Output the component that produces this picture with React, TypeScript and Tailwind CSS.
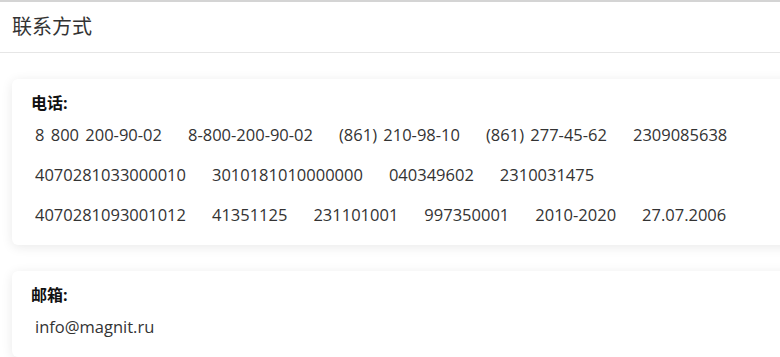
const rows = [
  ["8 800 200-90-02", "8-800-200-90-02", "(861) 210-98-10", "(861) 277-45-62", "2309085638"],
  ["4070281033000010", "3010181010000000", "040349602", "2310031475"],
  ["4070281093001012", "41351125", "231101001", "997350001", "2010-2020", "27.07.2006"],
];

function Card({ label, lines }: { label: string; lines: string[][] }) {
  return (
    <div className="w-[800px] rounded-md bg-white pt-[14px] pb-[10px] pl-[19px] shadow-[0_2px_12px_rgba(0,0,0,0.09)]">
      <div className="mb-[2px] text-[16px] font-bold leading-[20px] text-[#111]">{label}</div>
      {lines.map((row, i) => (
        <div
          key={i}
          className="flex h-10 items-center gap-x-[26px] pl-[4px] text-[16.5px] text-[#333] [word-spacing:2px]"
        >
          {row.map((v) => (
            <span key={v} className="whitespace-nowrap">
              {v}
            </span>
          ))}
        </div>
      ))}
    </div>
  );
}

export default function App() {
  return (
    <div
      className="h-[357px] w-[780px] overflow-hidden bg-white"
      style={{ fontFamily: '"Open Sans", "Noto Sans CJK SC", sans-serif' }}
    >
      <div className="h-[2px] bg-[#d4d4d4]" />
      <div className="flex h-[51px] items-center border-b border-[#e6e6e6] pl-[12px] text-[20px] text-[#333]">
        联系方式
      </div>
      <div className="flex flex-col gap-[26px] pt-[26px] pl-[12px]">
        <Card label="电话:" lines={rows} />
        <Card label="邮箱:" lines={[["info@magnit.ru"]]} />
      </div>
    </div>
  );
}
